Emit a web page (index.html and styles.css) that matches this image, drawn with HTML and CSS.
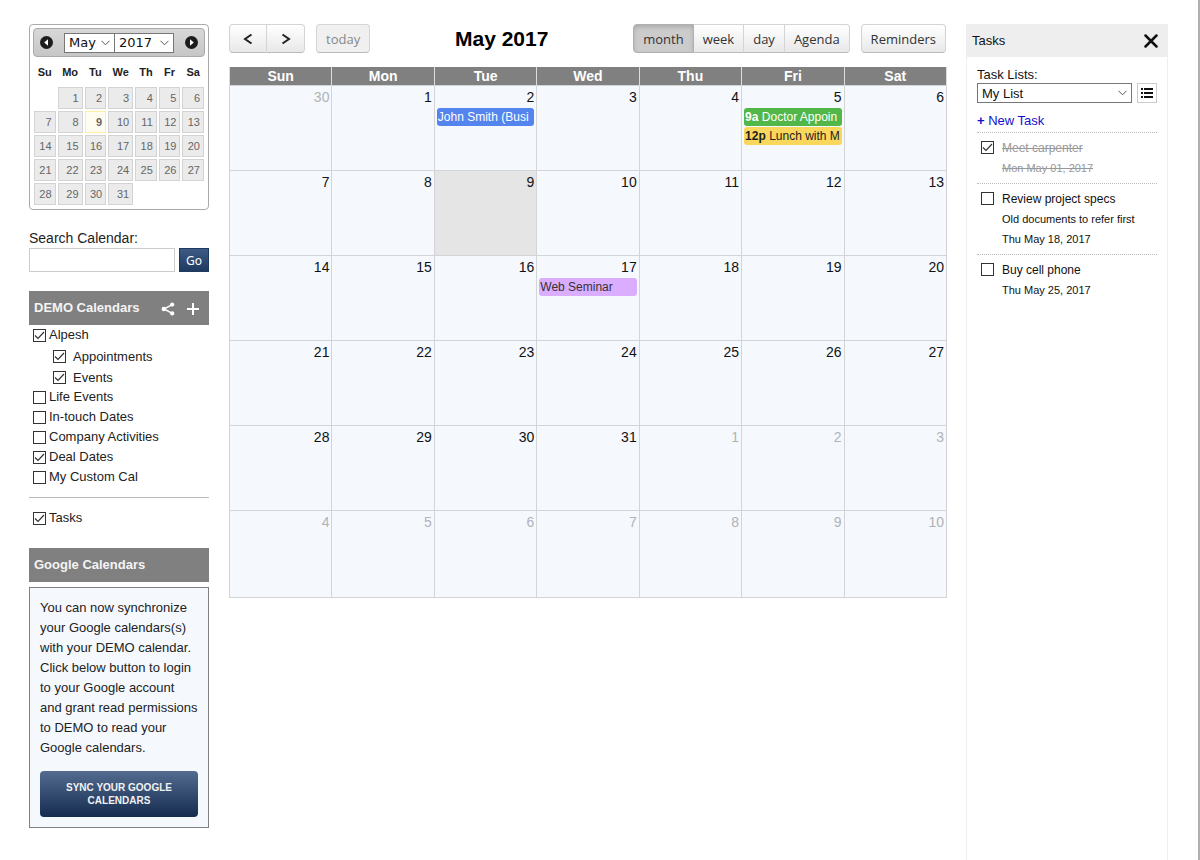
FILE: index.html
```
<!DOCTYPE html>
<html lang="en">
<head>
<meta charset="utf-8">
<title>Calendar - May 2017</title>
<link rel="stylesheet" href="styles.css">
</head>
<body>
<div class="page">
  <aside class="sidebar">
    <section class="mini">
      <div class="mini-head">
        <button class="mini-nav" aria-label="Previous month"><svg width="13" height="13" viewBox="0 0 13 13"><circle cx="6.5" cy="6.5" r="6.5" fill="#1c1c1c"/><path d="M8 3.2v6.6L4.2 6.5z" fill="#fff"/></svg></button>
        <div class="mini-selects">
          <select class="select" aria-label="Month"><option>May</option></select>
          <select class="select year" aria-label="Year"><option>2017</option></select>
        </div>
        <button class="mini-nav" aria-label="Next month"><svg width="13" height="13" viewBox="0 0 13 13"><circle cx="6.5" cy="6.5" r="6.5" fill="#1c1c1c"/><path d="M5 3.2v6.6l3.8-3.3z" fill="#fff"/></svg></button>
      </div>
      <table class="mini-table">
        <thead><tr><th>Su</th><th class="wide">Mo</th><th>Tu</th><th class="wide">We</th><th>Th</th><th>Fr</th><th>Sa</th></tr></thead>
        <tbody>
          <tr><td></td><td><a href="#">1</a></td><td><a href="#">2</a></td><td><a href="#">3</a></td><td><a href="#">4</a></td><td><a href="#">5</a></td><td><a href="#">6</a></td></tr>
          <tr><td><a href="#">7</a></td><td><a href="#">8</a></td><td><a href="#" class="now">9</a></td><td><a href="#">10</a></td><td><a href="#">11</a></td><td><a href="#">12</a></td><td><a href="#">13</a></td></tr>
          <tr><td><a href="#">14</a></td><td><a href="#">15</a></td><td><a href="#">16</a></td><td><a href="#">17</a></td><td><a href="#">18</a></td><td><a href="#">19</a></td><td><a href="#">20</a></td></tr>
          <tr><td><a href="#">21</a></td><td><a href="#">22</a></td><td><a href="#">23</a></td><td><a href="#">24</a></td><td><a href="#">25</a></td><td><a href="#">26</a></td><td><a href="#">27</a></td></tr>
          <tr><td><a href="#">28</a></td><td><a href="#">29</a></td><td><a href="#">30</a></td><td><a href="#">31</a></td><td></td><td></td><td></td></tr>
        </tbody>
      </table>
    </section>

    <form class="search">
      <label for="q">Search Calendar:</label>
      <div class="search-row"><input type="text" id="q"><button type="button" class="go">Go</button></div>
    </form>

    <h2 class="bar">DEMO Calendars
      <span class="bar-tools">
        <button class="icon-btn" aria-label="Share"><svg width="14" height="14" viewBox="0 0 14 14"><path d="M11.2 2.6 3 7l8.2 4.4" fill="none" stroke="#fff" stroke-width="1.5"/><circle cx="11.2" cy="2.6" r="2.1" fill="#fff"/><circle cx="2.8" cy="7" r="2.2" fill="#fff"/><circle cx="11.2" cy="11.4" r="2.1" fill="#fff"/></svg></button>
        <button class="icon-btn" aria-label="Add"><svg width="14" height="14" viewBox="0 0 14 14"><path d="M7 1v12M1 7h12" stroke="#fff" stroke-width="2"/></svg></button>
      </span>
    </h2>
    <div class="cals">
      <label class="cal"><input type="checkbox" checked>Alpesh</label>
      <label class="cal sub"><input type="checkbox" checked>Appointments</label>
      <label class="cal sub"><input type="checkbox" checked>Events</label>
      <label class="cal"><input type="checkbox">Life Events</label>
      <label class="cal"><input type="checkbox">In-touch Dates</label>
      <label class="cal"><input type="checkbox">Company Activities</label>
      <label class="cal"><input type="checkbox" checked>Deal Dates</label>
      <label class="cal"><input type="checkbox">My Custom Cal</label>
    </div>
    <div class="cals tasks-toggle">
      <label class="cal"><input type="checkbox" checked>Tasks</label>
    </div>

    <h2 class="bar">Google Calendars</h2>
    <div class="sync">
      <p>You can now synchronize your Google calendars(s) with your DEMO calendar. Click below button to login to your Google account and grant read permissions to DEMO to read your Google calendars.</p>
      <button class="sync-btn">SYNC YOUR GOOGLE CALENDARS</button>
    </div>
  </aside>

  <main class="main">
    <header class="toolbar">
      <div class="side">
        <div class="group">
          <button class="btn arrow" aria-label="Previous"><svg width="10" height="12" viewBox="0 0 10 12"><path d="M8.5 1.5 2 6l6.5 4.5" fill="none" stroke="#222" stroke-width="2"/></svg></button>
          <button class="btn arrow" aria-label="Next"><svg width="10" height="12" viewBox="0 0 10 12"><path d="M1.500 1.500 8 6l-6.500 4.500" fill="none" stroke="#222" stroke-width="2"/></svg></button>
        </div>
        <div class="group"><button class="btn" disabled>today</button></div>
      </div>
      <h1>May 2017</h1>
      <div class="side end">
        <div class="group"><button class="btn active">month</button><button class="btn">week</button><button class="btn">day</button><button class="btn">Agenda</button></div>
        <div class="group"><button class="btn">Reminders</button></div>
      </div>
    </header>
    <table class="month">
      <thead><tr><th>Sun</th><th>Mon</th><th>Tue</th><th>Wed</th><th>Thu</th><th>Fri</th><th>Sat</th></tr></thead>
      <tbody>
        <tr><td class="other">30</td><td>1</td><td>2<a href="#" class="event blue">John Smith (Busi</a></td><td>3</td><td>4</td><td>5<a href="#" class="event green"><b>9a</b> Doctor Appoin</a><a href="#" class="event yellow"><b>12p</b> Lunch with M</a></td><td>6</td></tr>
        <tr><td>7</td><td>8</td><td class="today">9</td><td>10</td><td>11</td><td>12</td><td>13</td></tr>
        <tr><td>14</td><td>15</td><td>16</td><td>17<a href="#" class="event purple">Web Seminar</a></td><td>18</td><td>19</td><td>20</td></tr>
        <tr><td>21</td><td>22</td><td>23</td><td>24</td><td>25</td><td>26</td><td>27</td></tr>
        <tr><td>28</td><td>29</td><td>30</td><td>31</td><td class="other">1</td><td class="other">2</td><td class="other">3</td></tr>
        <tr class="last"><td class="other">4</td><td class="other">5</td><td class="other">6</td><td class="other">7</td><td class="other">8</td><td class="other">9</td><td class="other">10</td></tr>
      </tbody>
    </table>
  </main>

  <aside class="tasks">
    <header class="tasks-head"><h2>Tasks</h2><button class="icon-btn" aria-label="Close"><svg width="14" height="14" viewBox="0 0 14 14"><path d="M1.500 1.500l11 11M12.500 1.500l-11 11" stroke="#111" stroke-width="2.500" stroke-linecap="round"/></svg></button></header>
    <div class="tasks-body">
      <label for="list">Task Lists:</label>
      <div class="list-row">
        <select class="select" id="list"><option>My List</option></select>
        <button class="list-btn" aria-label="Manage lists"><svg width="12" height="10" viewBox="0 0 12 10"><path d="M0 1h2M0 5h2M0 9h2M3 1h9M3 5h9M3 9h9" stroke="#111" stroke-width="2"/></svg></button>
      </div>
      <a href="#" class="new"><b>+</b> New Task</a>
      <ul class="task-list">
        <li class="done"><input type="checkbox" id="t1" checked><div><label for="t1">Meet carpenter</label><small>Mon May 01, 2017</small></div></li>
        <li><input type="checkbox" id="t2"><div><label for="t2">Review project specs</label><small>Old documents to refer first</small><small>Thu May 18, 2017</small></div></li>
        <li><input type="checkbox" id="t3"><div><label for="t3">Buy cell phone</label><small>Thu May 25, 2017</small></div></li>
      </ul>
    </div>
  </aside>
</div>
</body>
</html>
```
FILE: styles.css
```
* { box-sizing: border-box; }
body {
  margin: 0;
  background: #fff;
  color: #222;
  font: 13px/20px "Liberation Sans", Arial, sans-serif;
}
h1, h2, p, ul { margin: 0; padding: 0; }
a { text-decoration: none; }
svg { display: block; }
button { cursor: pointer; }

.page {
  display: flex;
  align-items: stretch;
  min-height: 100vh;
  padding: 24px 30px 0 29px;
  border-right: 2px solid #b0b0b0;
}
.sidebar { flex: 0 0 180px; min-width: 0; margin-right: 20px; }
.main { flex: 1; min-width: 0; margin-right: 19px; }
.tasks { flex: 0 0 202px; min-width: 0; border: solid #eee; border-width: 0 1px; }

/* form controls */
.select {
  appearance: none;
  height: 20px;
  padding: 0 4px;
  border: 1px solid #777;
  border-radius: 0;
  color: #111;
  background: #fff url("data:image/svg+xml,%3Csvg xmlns='http://www.w3.org/2000/svg' width='9' height='6'%3E%3Cpath d='M.5.8l4 4 4-4' fill='none' stroke='%23555'/%3E%3C/svg%3E") no-repeat right 4px center;
}
input[type="checkbox"] {
  appearance: none;
  flex: none;
  width: 13px;
  height: 13px;
  margin: 0;
  border: 1px solid #333;
  background: #fff no-repeat center;
}
input[type="checkbox"]:checked {
  background-image: url("data:image/svg+xml,%3Csvg xmlns='http://www.w3.org/2000/svg' width='11' height='11'%3E%3Cpath d='M1 5.500l3 3L10 2' fill='none' stroke='%23333' stroke-width='1.200'/%3E%3C/svg%3E");
}
.icon-btn { padding: 0; border: 0; background: none; }

/* date picker */
.mini {
  padding: 3px;
  border: 1px solid #aaa;
  border-radius: 4px;
}
.mini-head {
  display: flex;
  align-items: center;
  justify-content: space-between;
  height: 29px;
  padding: 0 6px;
  border: 1px solid #aaa;
  border-radius: 4px;
  background: linear-gradient(#d8d8d8, #c6c6c6);
}
.mini-nav { padding: 0; border: 0; background: none; }
.mini-selects { display: flex; }
.mini-selects .select { width: 51px; font: 13px "DejaVu Sans", sans-serif; }
.mini-selects .year { width: 60px; margin-left: -1px; }
.mini-table {
  width: 100%;
  border-collapse: collapse;
  table-layout: fixed;
  font-size: 11px;
}
.mini-table th { height: 29px; padding: 0; color: #222; }
.mini-table .wide { width: 27px; }
.mini-table td { height: 24px; padding: 1px; }
.mini-table a {
  display: block;
  height: 22px;
  padding-right: 3px;
  border: 1px solid #d3d3d3;
  background: #ebebeb;
  color: #666;
  line-height: 20px;
  text-align: right;
}
.mini-table .now { border-color: #fcefa1; background: #fffdf0; font-weight: bold; }

.search { margin: 18px 0 19px; font-size: 14px; }
.search label { display: block; line-height: 20px; }
.search-row { display: flex; gap: 4px; }
.search input {
  flex: 1;
  min-width: 0;
  height: 24px;
  border: 1px solid #ccc;
}
.go {
  width: 30px;
  height: 24px;
  padding: 0;
  border: 1px solid #1f3a60;
  background: linear-gradient(#3d5a85, #1f3a60);
  color: #fff;
  font: 12px "Noto Sans", sans-serif;
}

.bar {
  display: flex;
  align-items: center;
  justify-content: space-between;
  height: 34px;
  padding: 0 9px 0 5px;
  background: #808080;
  color: #f4f4f4;
  font-size: 13px;
}
.bar-tools { display: flex; gap: 11px; padding-top: 2px; }
.cals { padding-bottom: 10px; border-bottom: 1px solid #bbb; }
.cal {
  display: flex;
  align-items: center;
  gap: 3px;
  height: 20px;
  padding-left: 4px;
}
.cal.sub { height: 21px; padding: 2px 0 0 24px; gap: 7px; }
.tasks-toggle { padding: 10px 0 20px; border: 0; }
.sync {
  margin-top: 5px;
  padding: 10px;
  border: 1px solid #808080;
  background: #f5f9fe;
}
.sync p { margin-bottom: 13px; }
.sync-btn {
  width: 100%;
  height: 46px;
  padding: 0 16px;
  border: 0;
  border-radius: 4px;
  background: linear-gradient(#526b8f, #152c50);
  color: #f2f2f2;
  font: bold 10px/13px "Liberation Sans", Arial, sans-serif;
}

/* toolbar */
.toolbar {
  display: flex;
  align-items: center;
  justify-content: space-between;
  height: 29px;
  margin-bottom: 14px;
}
.toolbar h1 { color: #000; font-size: 21px; line-height: 28px; }
.side { display: flex; gap: 11px; }
.side.end { padding-right: 1px; }
.group { display: flex; }
.btn {
  height: 29px;
  padding: 0 9px;
  border: 1px solid #d4d4d4;
  border-bottom-color: #bbb;
  border-left-width: 0;
  background: linear-gradient(#fff, #e8e8e8);
  color: #333;
  font: 13px "Open Sans", "Noto Sans", sans-serif;
}
.btn:first-child { border-left-width: 1px; border-radius: 4px 0 0 4px; }
.btn:last-child { border-radius: 0 4px 4px 0; }
.btn:only-child { border-radius: 4px; }
.btn.active {
  border-color: #b0b0b0;
  background: #ccc;
  box-shadow: inset 0 2px 4px #aaa;
}
.btn:disabled { background: #f0f0f0; color: #888; }
.arrow { display: flex; align-items: center; justify-content: center; width: 38px; }

/* month grid */
.month {
  width: 100%;
  border-collapse: collapse;
  table-layout: fixed;
  font-size: 14px;
}
.month th {
  height: 18px;
  padding: 1px 0 0;
  border: 1px solid #ddd;
  border-width: 0 1px;
  background: #808080;
  color: #fff;
  line-height: 17px;
}
.month td {
  height: 85px;
  padding: 3px 2px 0;
  border: 1px solid #d2d4d6;
  background: #f5f9fe;
  color: #111;
  line-height: 16px;
  text-align: right;
  vertical-align: top;
}
.month .last td { height: 87px; }
.month .other { color: #b0b3b6; }
.month .today { background: #e5e5e5; }
.event {
  display: block;
  height: 18px;
  margin: 3px 0 1px;
  padding: 0 1px;
  border-radius: 3px;
  overflow: hidden;
  font-size: 12px;
  line-height: 18px;
  text-align: left;
  white-space: nowrap;
}
.event + .event { margin-top: 0; }
.event.blue { background: #5484ed; color: #fff; }
.event.green { background: #51b749; color: #fff; }
.event.yellow { background: #f9d65c; color: #1d1d1d; }
.event.purple { background: #dbadff; color: #333; }

/* tasks panel */
.tasks-head {
  display: flex;
  align-items: center;
  justify-content: space-between;
  height: 33px;
  padding: 0 9px 0 5px;
  background: #eee;
}
.tasks-head h2 { color: #111; font-size: 13px; font-weight: normal; }
.tasks-body { padding: 9px 10px; color: #111; }
.tasks-body > label { display: block; line-height: 17px; }
.list-row { display: flex; gap: 5px; }
.list-row .select { flex: 1; min-width: 0; font: 13px "Liberation Sans", Arial, sans-serif; }
.list-btn {
  display: flex;
  align-items: center;
  justify-content: center;
  width: 20px;
  height: 20px;
  padding: 0;
  border: 1px solid #ccc;
  background: #fff;
}
.new { display: block; margin: 8px 0 1px; color: #11c; }
.task-list { list-style: none; }
.task-list li {
  display: flex;
  gap: 8px;
  padding: 5px 0 5px 4px;
  border-top: 1px dotted #bbb;
}
.task-list input { margin-top: 3px; }
.task-list label, .task-list small { display: block; }
.task-list label { font-size: 12px; }
.task-list small { font-size: 11px; }
.done label, .done small { color: #999; text-decoration: line-through; }
```
